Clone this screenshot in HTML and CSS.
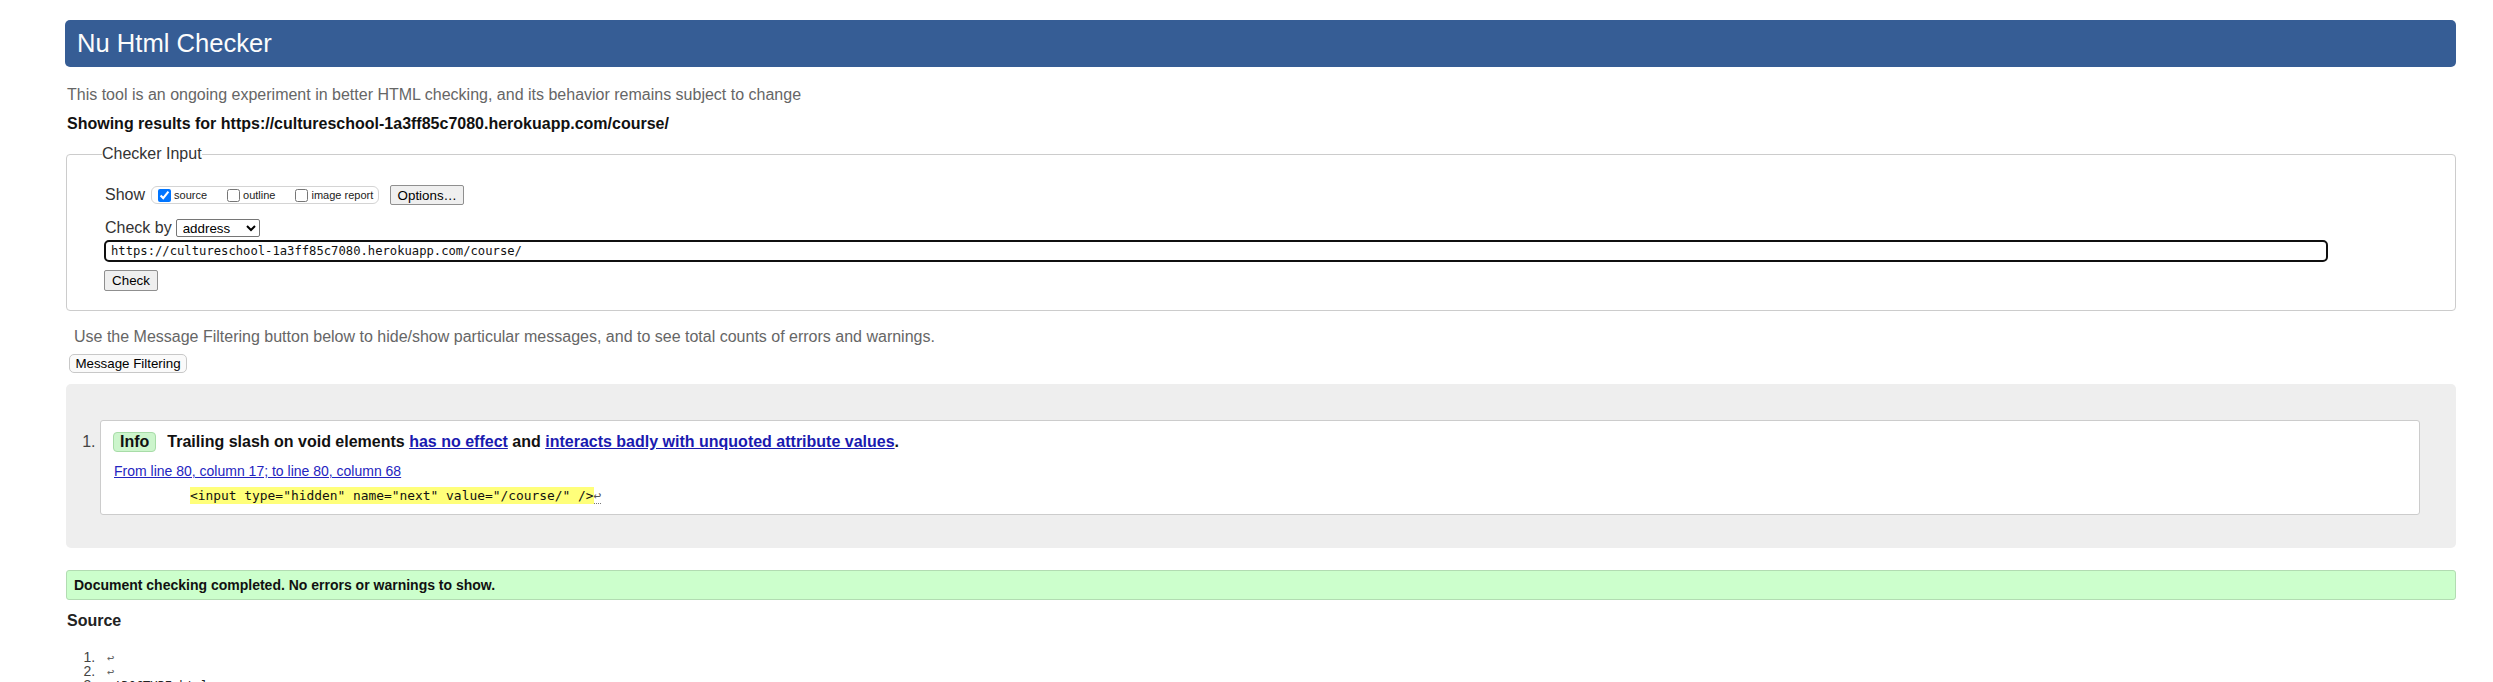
FILE: index.html
```html
<!DOCTYPE html>
<html lang="en">
<head>
<meta charset="utf-8">
<title>Showing results for https://cultureschool-1a3ff85c7080.herokuapp.com/course/ - Nu Html Checker</title>
<link rel="stylesheet" href="styles.css">
</head>
<body>
<h1 class="title">Nu Html Checker</h1>
<p class="intro">This tool is an ongoing experiment in better HTML checking, and its behavior remains subject to change</p>
<p class="results-for">Showing results for https://cultureschool-1a3ff85c7080.herokuapp.com/course/</p>
<form class="checker-form">
  <fieldset class="checker">
    <legend class="checker-legend">Checker Input</legend>
    <div class="row show-row">
      <span class="row-label">Show</span>
      <span class="show-opts">
        <label class="opt"><input type="checkbox" checked>source</label>
        <label class="opt"><input type="checkbox">outline</label>
        <label class="opt"><input type="checkbox">image report</label>
      </span>
      <button type="button" class="btn btn-options">Options…</button>
    </div>
    <div class="row checkby-row">
      <span class="row-label">Check by</span>
      <select class="checkby-select"><option>address</option><option>file upload</option><option>text input</option></select>
    </div>
    <div class="row url-row">
      <input class="url-input" type="text" value="https://cultureschool-1a3ff85c7080.herokuapp.com/course/">
    </div>
    <div class="row submit-row">
      <button type="button" class="btn btn-check">Check</button>
    </div>
  </fieldset>
</form>
<p class="filter-note">Use the Message Filtering button below to hide/show particular messages, and to see total counts of errors and warnings.</p>
<button type="button" class="btn-filter">Message Filtering</button>
<div class="results">
  <ol class="messages">
    <li class="info">
      <p class="msg"><strong class="badge">Info</strong><span class="msg-text">Trailing slash on void elements <a href="#">has no effect</a> and <a href="#">interacts badly with unquoted attribute values</a>.</span></p>
      <p class="location"><a href="#" class="loc-link">From line 80, column 17; to line 80, column 68</a></p>
      <p class="extract"><code><b class="hl">&lt;input type="hidden" name="next" value="/course/" /&gt;</b><b class="lf" title="Line break">↩</b></code></p>
    </li>
  </ol>
</div>
<p class="success">Document checking completed. No errors or warnings to show.</p>
<h2 class="source-title">Source</h2>
<ol class="source">
  <li><code><b class="lf">↩</b></code></li>
  <li><code><b class="lf">↩</b></code></li>
  <li><code>&lt;!DOCTYPE html&gt;<b class="lf">↩</b></code></li>
</ol>
</body>
</html>
```
FILE: styles.css
```css
html {
  background: #fff;
}

body {
  margin: 0;
  padding: 20px 37px 0 66px;
  font-family: "Liberation Sans", Arial, sans-serif;
  font-size: 16px;
  color: #111;
}

.title {
  margin: 0 0 0 -1px;
  padding: 9px 12px;
  background: #365d95;
  color: #fcfcfc;
  font-size: 25.6px;
  font-weight: normal;
  line-height: 29px;
  border-radius: 5px;
}

.intro {
  margin: 19px 0 0 1px;
  color: #666;
}

.results-for {
  margin: 11px 0 0 1px;
  font-weight: bold;
  color: #111;
}

.checker-form {
  margin: 12px 0 0 0;
}

.checker {
  margin: 0;
  padding: 0 35px 19px 37px;
  border: 1px solid #ccc;
  border-radius: 4px;
  min-inline-size: 0;
}

.checker-legend {
  margin-left: -2px;
  padding: 0;
  color: #333;
  font-size: 16px;
}

.row {
  display: flex;
  align-items: center;
}

.show-row {
  margin-top: 22px;
  height: 20px;
}

.row-label {
  color: #333;
  margin-left: 1px;
}

.show-opts {
  display: inline-flex;
  align-items: center;
  height: 16px;
  margin-left: 6px;
  padding: 0 5px 0 2px;
  border: 1px solid #d4d4d4;
  border-radius: 6px;
}

.opt {
  display: inline-flex;
  align-items: center;
  font-size: 11px;
  color: #222;
  margin-right: 16px;
}

.opt:last-child {
  margin-right: 0;
}

.opt input {
  margin: 0 3px 0 4px;
  width: 13px;
  height: 13px;
}

.btn {
  font-family: "Liberation Sans", Arial, sans-serif;
  font-size: 13.33px;
  color: #000;
  background: #efefef;
  border: 1px solid #8f8f8f;
  border-radius: 2px;
  box-sizing: border-box;
  line-height: 15px;
  white-space: nowrap;
}

.btn-options {
  margin-left: 11px;
  width: 74px;
  height: 20px;
  padding: 1px 4px;
}

.checkby-row {
  margin-top: 14px;
  height: 18px;
}

.checkby-select {
  margin-left: 4px;
  width: 84px;
  height: 18px;
  font-family: "Liberation Sans", Arial, sans-serif;
  font-size: 13.33px;
  color: #000;
  background: #fff;
  border: 1px solid #767676;
  border-radius: 2px;
  padding: 0 0 0 2px;
}

.url-row {
  margin-top: 3px;
}

.url-input {
  box-sizing: border-box;
  width: 2224px;
  height: 22px;
  margin: 0;
  padding: 0 5px;
  border: 2px solid #101010;
  border-radius: 5px;
  font-family: "DejaVu Sans Mono", "Liberation Mono", monospace;
  font-size: 12.2px;
  color: #111;
  background: #fff;
  outline: none;
}

.submit-row {
  margin-top: 8px;
}

.btn-check {
  width: 54px;
  height: 21px;
  padding: 1px 4px;
}

.filter-note {
  margin: 17px 0 0 8px;
  color: #666;
}

.btn-filter {
  display: block;
  margin: 8px 0 0 3px;
  width: 118px;
  height: 19px;
  padding: 0 4px;
  box-sizing: border-box;
  font-family: "Liberation Sans", Arial, sans-serif;
  font-size: 13.33px;
  line-height: 15px;
  white-space: nowrap;
  color: #000;
  background: #fafafa;
  border: 1px solid #c8c8c8;
  border-radius: 5px;
}

.results {
  margin-top: 11px;
  padding: 36px 36px 33px 0;
  background: #eee;
  border-radius: 5px;
}

.messages {
  margin: 0;
  padding-left: 34px;
}

.info {
  padding: 11px 12px 10px 12px;
  background: #fff;
  border: 1px solid #ccc;
  border-radius: 3px;
  color: #444;
}

.msg {
  margin: 0;
  line-height: 20px;
  color: #111;
}

.badge {
  display: inline-block;
  padding: 0 6px;
  line-height: 18px;
  background: #ccf5cc;
  border: 1px solid #a8dca8;
  border-radius: 4px;
  color: #111;
  vertical-align: top;
}

.msg-text {
  margin-left: 11px;
  font-weight: bold;
}

.msg-text a {
  color: #1a1ab0;
}

.location {
  margin: 11px 0 0 1px;
  font-size: 14px;
  line-height: 16px;
}

.loc-link {
  color: #2424c0;
}

.extract {
  margin: 7px 0 0 77px;
  line-height: 17px;
}

.extract code {
  font-family: "DejaVu Sans Mono", "Liberation Mono", monospace;
  font-size: 12.9px;
  color: #111;
}

.hl {
  font-weight: normal;
  background: #ffff7a;
  padding: 1px 0;
}

.lf {
  font-weight: normal;
  color: #555;
  border-bottom: 1px dotted #777;
}

.success {
  margin: 22px 0 0 0;
  padding: 6px 7px;
  background: #ccffcc;
  border: 1px solid #b2dcb2;
  border-radius: 3px;
  font-size: 14px;
  font-weight: bold;
  line-height: 16px;
  color: #111;
}

.source-title {
  margin: 12px 0 0 1px;
  font-size: 16px;
  line-height: 18px;
  color: #222;
}

.source {
  margin: 21px 0 0 0;
  padding-left: 33px;
  font-size: 14px;
  line-height: 13px;
  color: #444;
}

.source li {
  padding-left: 8px;
}

.source code {
  font-family: "DejaVu Sans Mono", "Liberation Mono", monospace;
  font-size: 12px;
  color: #222;
}

.source .lf {
  border-bottom: none;
  color: #666;
}
```
